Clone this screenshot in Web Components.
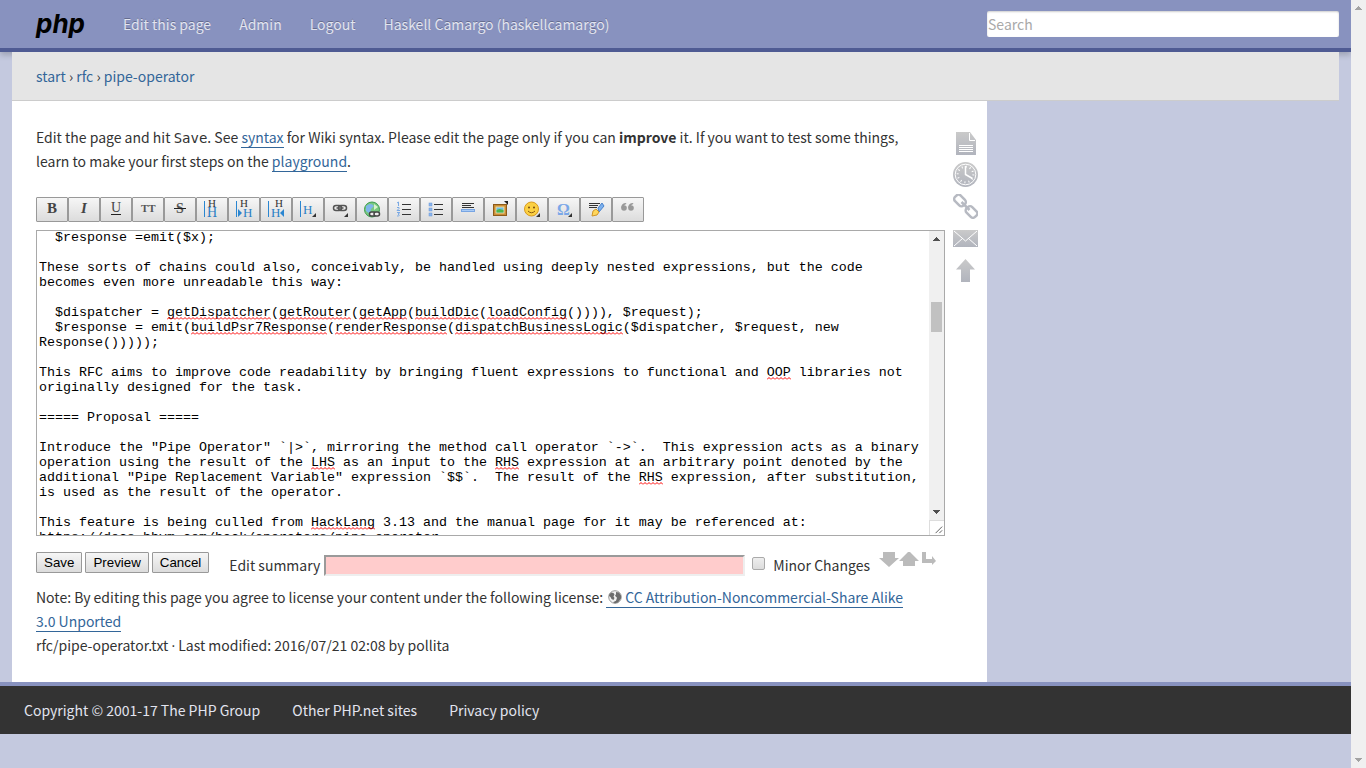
<!DOCTYPE html>
<html lang="en">
<head>
<meta charset="utf-8">
<title>PHP: rfc:pipe-operator</title>
<style>
:root{--blue:#8892bf;--navy:#4f5b93;--back:#c4c9df;--link:#369;--side:352px}
html,body{margin:0;min-height:100%}
body{display:flex;min-height:100vh;background:var(--back);color:#333;font:14px/24px "Noto Sans CJK SC","Source Sans Pro",sans-serif}
</style>
</head>
<body>
<wiki-page>
  <site-header slot="header">
    <a href="#edit">Edit this page</a><a href="#admin">Admin</a><a href="#logout">Logout</a><a href="#user">Haskell Camargo (haskellcamargo)</a>
  </site-header>
  <crumb-trail slot="crumbs"></crumb-trail>
  <edit-intro></edit-intro>
  <edit-toolbar></edit-toolbar>
  <wiki-editor></wiki-editor>
  <edit-actions></edit-actions>
  <license-note></license-note>
  <page-tools slot="tools"></page-tools>
  <site-footer slot="footer">
    <a href="#copyright">Copyright © 2001-17 The PHP Group</a><a href="#sites">Other PHP.net sites</a><a href="#privacy">Privacy policy</a>
  </site-footer>
</wiki-page>
<scroll-bar class="window"></scroll-bar>

<script>
const base = `:host,*{box-sizing:border-box}:host{display:block}svg{display:block}a{color:var(--link);text-decoration:none}`;
function define(name, css, html, ready) {
  customElements.define(name, class extends HTMLElement {
    constructor() {
      super();
      this.attachShadow({mode: 'open'}).innerHTML = `<style>${base}${css}</style>${html}`;
    }
    connectedCallback() { if (ready) ready(this.shadowRoot, this); }
  });
}

define('scroll-bar', `
:host{display:flex;flex-direction:column;flex:none;width:15px;background:#f0f0f0;--arrow:#505050}
:host(.window){--arrow:#a3a3a3}
.track{flex:1;padding:54px 2px 0}
.thumb{height:30px;background:#c1c1c1}
:host(.window) .thumb{display:none}
svg{fill:var(--arrow)}`,
`<svg width="15" height="17" viewBox="0 0 15 17" shape-rendering="crispEdges"><path d="M4 10h7v-1h-1v-1h-1v-1h-1v-1h-1v1h-1v1h-1v1h-1z"/></svg>
<div class="track"><div class="thumb"></div></div>
<svg width="15" height="17" viewBox="0 0 15 17" shape-rendering="crispEdges"><path d="M4 7h7v1h-1v1h-1v1h-1v1h-1v-1h-1v-1h-1v-1h-1z"/></svg>`);

define('wiki-page', `
:host{flex:1;min-width:0}
.wrap{margin:0 12px}
.columns{display:grid;grid-template-columns:minmax(0,1fr) var(--side)}
main{display:grid;grid-template-columns:minmax(0,1fr) 25px;column-gap:8px;background:#fff;padding:24px 9px 24px 24px}`,
`<slot name="header"></slot>
<div class="wrap"><slot name="crumbs"></slot><div class="columns"><main><div><slot></slot></div><slot name="tools"></slot></main></div></div>
<slot name="footer"></slot>`);

define('site-header', `
:host{display:grid;grid-template-columns:minmax(0,1fr) var(--side);align-items:center;height:52px;padding:0 12px;background:var(--blue);border-bottom:4px solid var(--navy);box-shadow:0 3px 6px rgba(0,0,0,.2)}
.left{display:flex;align-items:center;padding-left:24px}
.logo{width:87px;color:#000;font:italic bold 26px/24px Inter,sans-serif}
nav{display:flex;gap:28px}
::slotted(a){color:#e2e4ef;text-decoration:none;text-shadow:0 -1px 0 rgba(0,0,0,.25);white-space:nowrap}
input{display:block;width:100%;height:26px;padding:1px;border:0;border-radius:2px;background:#fff;box-shadow:inset 0 1px 2px rgba(0,0,0,.2);color:#333;font:inherit}
input::placeholder{color:#a9a9a9;opacity:1}`,
`<div class="left"><a class="logo" href="#home">php</a><nav><slot></slot></nav></div>
<input type="search" placeholder="Search" aria-label="Search">`);

define('crumb-trail', `
:host{position:relative;padding:12px 24px;background:#e5e5e5;border-bottom:1px solid #ccc}`,
`<nav><a href="#start">start</a> › <a href="#rfc">rfc</a> › <a href="#pipe">pipe-operator</a></nav>`);

define('edit-intro', `
:host{padding-right:24px}
p{margin:0 0 24px}a{border-bottom:1px solid}code{font:14px/1 "DejaVu Sans Mono",monospace}`,
`<p>Edit the page and hit <code>Save</code>. See <a href="#syntax">syntax</a> for Wiki syntax. Please edit the page only if you can <strong>improve</strong> it. If you want to test some things, learn to make your first steps on the <a href="#playground">playground</a>.</p>`);

const ser = 'font-family="Liberation Serif, serif"';
const corner = '<path d="M18 13v4h-4z" fill="#333"/>';
const bar = '<path d="M2.5 1v16" stroke="#2a86d1"/>';
const icons = {
  'Bold Text': `<text x="5" y="13" ${ser} font-weight="bold" font-size="15" fill="#444">B</text>`,
  'Italic Text': `<text x="7" y="13" ${ser} font-weight="bold" font-style="italic" font-size="15" fill="#444">I</text>`,
  'Underlined Text': `<text x="5" y="12" ${ser} font-size="14" fill="#444">U</text><path d="M5 14.5h10" stroke="#222"/>`,
  'Monospaced Text': `<text x="3" y="12" ${ser} font-weight="bold" font-size="11" fill="#555">TT</text>`,
  'Strike-through Text': `<text x="6" y="13" ${ser} font-weight="bold" font-size="14" fill="#555">S</text><path d="M4 8.5h12" stroke="#222"/>`,
  'Same Level Headline': `${bar}<text x="6" y="7" ${ser} font-size="11" fill="#333">H</text><text x="5" y="17" ${ser} font-size="14" fill="#2a7fc4">H</text>`,
  'Lower Headline': `${bar}<text x="6" y="7" ${ser} font-size="11" fill="#333">H</text><path d="M4 9l4 4-4 4z" fill="#2a86d1"/><text x="9" y="17" ${ser} font-size="13" fill="#2a7fc4">H</text>`,
  'Higher Headline': `${bar}<text x="9" y="7" ${ser} font-size="11" fill="#333">H</text><path d="M18 9l-4 4 4 4z" fill="#2a86d1"/><text x="5" y="17" ${ser} font-size="13" fill="#2a7fc4">H</text>`,
  'Select Headline': `${bar}<text x="5" y="14" ${ser} font-size="13" fill="#2a7fc4">H</text>${corner}`,
  'Internal Link': `<g fill="none" stroke="#555" stroke-width="1.5"><rect x="3.5" y="5.5" width="8" height="5" rx="2.5"/><rect x="8.5" y="5.5" width="8" height="5" rx="2.5"/><path d="M6.5 8h7"/></g>${corner}`,
  'External Link': `<circle cx="10" cy="9.5" r="7.5" fill="#79c980" stroke="#3c9a50"/><path d="M4 6q5-4 8 0l-3 3-1 5-4-3z" fill="#7fb6ea"/><path d="M12 4l4 3-4 3z" fill="#d8f3cc"/><g fill="#eee" stroke="#444" stroke-width="1.5"><rect x="7.5" y="12" width="6" height="4" rx="2"/><rect x="12" y="12" width="5.5" height="4" rx="2"/></g>`,
  'Ordered List': `<path d="M8 4.500h9M8 9.500h9M8 14.500h9" stroke="#333"/><path d="M3 3l1.500-1v4M3 7.500h2v1l-2 2h3M3 12.500h3l-2 1.500q3 2-1 2" fill="none" stroke="#7aa9e4"/>`,
  'Unordered List': `<path d="M8 4.500h9M8 9.500h9M8 14.500h9" stroke="#333"/><g fill="#8ab4ec" stroke="#6a99d9" stroke-width=".5"><rect x="3" y="3" width="3" height="3"/><rect x="3" y="8" width="3" height="3"/><rect x="3" y="13" width="3" height="3"/></g>`,
  'Horizontal Rule': `<path d="M4 3.500h12M4 5.500h9M4 7.500h12" stroke="#333"/><rect x="3.500" y="9.500" width="13" height="2" fill="#a9cbf5" stroke="#78a5e3"/>`,
  'Add Images': `<rect x="3.500" y="4.500" width="13" height="11" fill="#c98c35" stroke="#8d5a18"/><rect x="6" y="7" width="8" height="6" fill="#6fc1ef" stroke="#f4dc98"/><path d="M6.500 10l3-1 4 1v2.500h-7z" fill="#4db748"/><path d="M18 1v4l-4-4z" fill="#222"/>`,
  'Smileys': `<circle cx="9.500" cy="9" r="7" fill="#fbd042" stroke="#d99a1f"/><circle cx="7" cy="7.500" r="1" fill="#754a10"/><circle cx="12" cy="7.500" r="1" fill="#754a10"/><path d="M6 11q3.500 3.500 7 0" fill="none" stroke="#8a5a12"/>${corner}`,
  'Special Chars': `<text x="3" y="15" ${ser} font-weight="bold" font-size="16" fill="#7aa7e8">Ω</text>${corner}`,
  'Insert Signature': `<path d="M3 3.500h11M3 5.500h9M3 7.500h8" stroke="#333"/><path d="M12 8l4-5 2 3-5 6z" fill="#7db1ee" stroke="#4a83cc"/><path d="M7 11l3-2 3 3-2 3-5 1z" fill="#ffd65b" stroke="#cf9628"/>`,
  'Quote': `<g fill="#999"><circle cx="6" cy="8" r="2.800"/><path d="M3.200 8q0-5 5-5v1q-2 .5-3 3z"/><circle cx="13" cy="8" r="2.800"/><path d="M10.200 8q0-5 5-5v1q-2 .5-3 3z"/></g>`
};
define('edit-toolbar', `
:host{display:flex;margin-bottom:8px}
svg{overflow:visible}
button{width:32px;height:25px;padding:0;border:1px solid #999;border-radius:1px;background:linear-gradient(#f6f6f6,#dcdcdc);display:grid;place-items:center}`,
Object.entries(icons).map(([n, s]) => `<button type="button" aria-label="${n}"><svg width="20" height="20" viewBox="0 0 20 20">${s}</svg></button>`).join(''));

const source = `  $response =emit($x);

These sorts of chains could also, conceivably, be handled using deeply nested expressions, but the code becomes even more unreadable this way:

  $dispatcher = getDispatcher(getRouter(getApp(buildDic(loadConfig()))), $request);
  $response = emit(buildPsr7Response(renderResponse(dispatchBusinessLogic($dispatcher, $request, new Response()))));

This RFC aims to improve code readability by bringing fluent expressions to functional and OOP libraries not originally designed for the task.

===== Proposal =====

Introduce the "Pipe Operator" \`|>\`, mirroring the method call operator \`->\`.  This expression acts as a binary operation using the result of the LHS as an input to the RHS expression at an arbitrary point denoted by the additional "Pipe Replacement Variable" expression \`$$\`.  The result of the RHS expression, after substitution, is used as the result of the operator.

This feature is being culled from HackLang 3.13 and the manual page for it may be referenced at:
https://docs.hhvm.com/hack/operators/pipe-operator`;
/* Misspelt words as [row, column, length] on the monospace grid. */
const marks = [[5,16,13],[5,30,9],[5,40,6],[5,47,8],[5,56,10],[6,19,17],[6,37,14],[6,52,21],[9,91,3],[15,34,3],[15,57,3],[16,75,3],[19,34,8]];
define('wiki-editor', `
:host{display:flex;border:1px solid #a9a9a9;background:#fff;margin-bottom:16px}
.field{position:relative;flex:1;min-width:0;overflow:hidden}
textarea{display:block;width:100%;padding:2px 6px 2px 2px;border:0;outline:0;resize:none;overflow:hidden;background:transparent;color:#000;font-family:"Liberation Mono",monospace;line-height:15px}
.marks{position:absolute;inset:0;pointer-events:none;font:10pt/15px "Liberation Mono",monospace}
.marks i{position:absolute;left:calc(2px + var(--c)*1ch);top:calc(var(--r)*15px + 11px);width:calc(var(--n)*1ch);height:3px;background:url("data:image/svg+xml,%3Csvg xmlns='http://www.w3.org/2000/svg' width='4' height='3'%3E%3Cpath d='M0 2.500L2 .5L4 2.500' fill='none' stroke='red'/%3E%3C/svg%3E") repeat-x}
.side{display:flex;flex-direction:column}
scroll-bar{flex:1}
.grip{border:1px solid #ddd;border-width:1px 0 0 1px}`,
`<div class="field"><textarea rows="20" spellcheck="false" aria-label="Page source"></textarea><div class="marks">${marks.map(([r, c, n]) => `<i style="--r:${r};--c:${c};--n:${n}"></i>`).join('')}</div></div>
<div class="side"><scroll-bar></scroll-bar><svg class="grip" width="15" height="15" viewBox="0 0 15 15"><path d="M6 13l7-7M10 13l3-3" stroke="#555"/></svg></div>`,
root => { const t = root.querySelector('textarea'); t.value = source; t.scrollTop = 3; });

define('edit-actions', `
:host{display:flex;align-items:center;height:26px;margin-bottom:7px;padding-right:6px}
.buttons{display:flex;gap:3px;align-self:flex-start;margin-right:20px}
button{height:21px;padding:0 7px;border:1px solid #999;border-radius:1px;background:linear-gradient(#f6f6f6,#dcdcdc);color:#000;font-family:"Liberation Sans",sans-serif;line-height:17px}
label{white-space:nowrap}
.text{flex:1;min-width:0;height:21px;margin:0 7px 0 4px;padding:1px;border:2px inset #eee;background:#fcc;font-family:"Liberation Sans",sans-serif}
.check{appearance:none;flex:none;width:13px;height:13px;margin:0 8px 4px 0;border:1px solid #aaa;border-radius:2px;background:linear-gradient(#eee,#dcdcdc)}
.size{display:flex;align-self:flex-start;margin-left:9px}
.size button{width:20px;height:16px;padding:0;border:0;background:none}
svg{fill:#bbb}`,
`<div class="buttons"><button>Save</button><button>Preview</button><button>Cancel</button></div>
<label for="summary">Edit summary</label><input class="text" id="summary" type="text">
<input class="check" id="minor" type="checkbox"><label for="minor">Minor Changes</label>
<div class="size">
<button aria-label="Enlarge"><svg width="20" height="16"><path d="M4 0h12v6h4l-10 9L0 6h4z"/></svg></button>
<button aria-label="Shrink"><svg width="20" height="16"><path d="M4 14h12v-5h4L10-1 0 9h4z"/></svg></button>
<button aria-label="Wrap"><svg width="20" height="16"><path d="M3 0h4v7h6V4l4 5-4 4v-2H3z"/></svg></button></div>`);

define('license-note', `
:host{padding-right:24px}
.dot{font-family:"Open Sans",sans-serif}
a{border-bottom:1px solid}svg{display:inline-block;vertical-align:-1px;margin:0 3px 0 2px}`,
`<div>Note: By editing this page you agree to license your content under the following license: <a href="#license"><svg width="14" height="14" viewBox="0 0 14 14"><circle cx="7" cy="7" r="6.300" fill="#f0f0f0" stroke="#999"/><path d="M1.500 4l2-1.500 2 .5 1 1.500-1 2 1 1.500-1 2-2-1-1-2-1.500-1zM8 2l3 .5 2 3v3l-3 4-3 .8-2-1 3-1.500 1-3-2-2 1-1.500z" fill="#6c6c6c"/></svg>CC Attribution-Noncommercial-Share Alike 3.0 Unported</a></div>
<div>rfc/pipe-operator.txt <span class="dot">·</span> Last modified: 2016/07/21 02:08 by pollita</div>`);

const tools = {
  'Show page': '<path d="M3 2h14l6 8v15H3z" fill="url(#g)"/><path d="M16.500 3v7.500H22M6 15.500h14M6 17.500h14M6 19.500h14M6 21.500h14" fill="none" stroke="#fff"/>',
  'Old revisions': '<circle cx="12.500" cy="12.500" r="12.500" fill="url(#g)"/><circle cx="12.500" cy="12.500" r="10.300" fill="none" stroke="#fff"/><circle cx="12.500" cy="12.500" r="7.800" fill="none" stroke="#fff" stroke-width="2" stroke-dasharray="1 3.084"/><path d="M12.500 4v8.500l7 4" fill="none" stroke="#fff" stroke-width="1.500"/>',
  'Backlinks': '<g fill="none" stroke="#b7bac2" stroke-width="2.500"><rect x="-6" y="-4" width="12" height="8" rx="3" transform="translate(7 6.500) rotate(45)"/><rect x="-6" y="-4" width="12" height="8" rx="3" transform="translate(18.500 18) rotate(45)"/><path d="M8.500 8l8 8"/></g>',
  'Subscribe': '<path d="M0 4h25v17H0z" fill="url(#g)"/><path d="M1 5l11.500 10L24 5M1 20l9-8M24 20l-9-8" fill="none" stroke="#fff"/>',
  'Back to top': '<path d="M12.500 1L22 11.500h-5V24H8V11.500H3z" fill="url(#g)"/>'
};
define('page-tools', `
:host{display:flex;flex-direction:column;gap:7px;padding-top:5px}`,
Object.entries(tools).map(([n, s]) => `<a href="#tool" aria-label="${n}"><svg width="25" height="25" viewBox="0 0 25 25"><defs><linearGradient id="g" x1="0" y1="0" x2="0" y2="1"><stop stop-color="#cacaca"/><stop offset="1" stop-color="#b1b4bd"/></linearGradient></defs>${s}</svg></a>`).join(''));

define('site-footer', `
:host{background:#333;border-top:4px solid var(--blue)}
nav{display:flex;gap:32px;padding:12px 24px}
::slotted(a){color:#e2e4ef;text-decoration:none}`,
`<nav><slot></slot></nav>`);
</script>
</body>
</html>
